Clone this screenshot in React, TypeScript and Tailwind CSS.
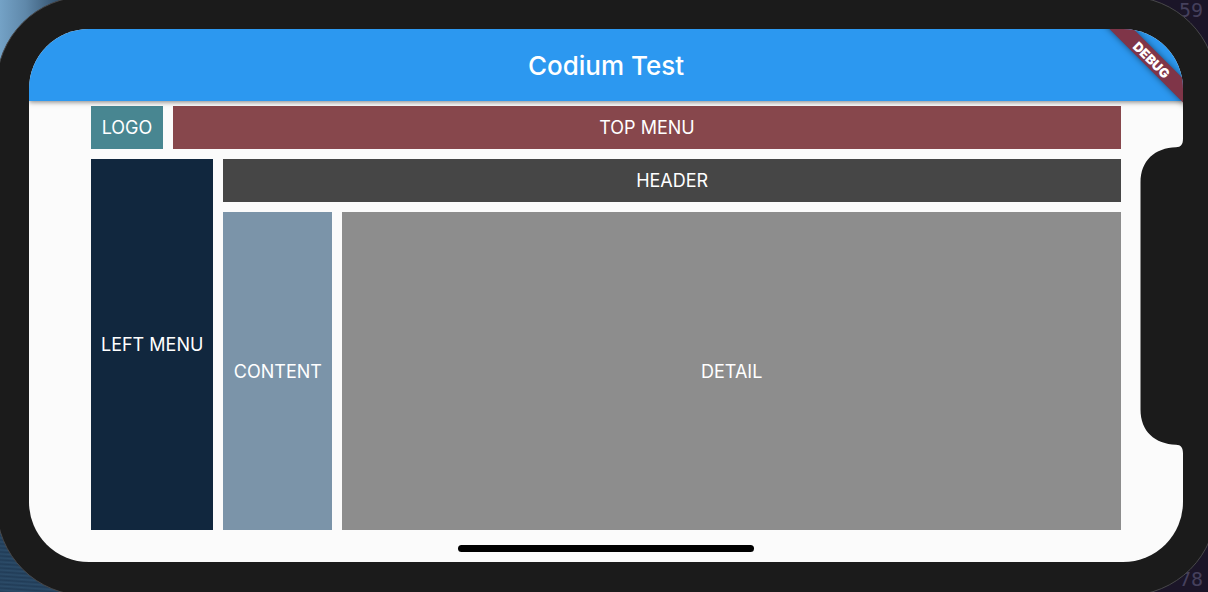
import type { ReactNode } from "react";

type PanelProps = {
  className: string;
  children: ReactNode;
};

function Panel({ className, children }: PanelProps) {
  return (
    <div className={`flex items-center justify-center px-[10px] text-lg leading-[23px] text-white ${className}`}>
      {children}
    </div>
  );
}

function Desktop() {
  return (
    <div aria-hidden="true" className="absolute inset-0 bg-[#1b1528]">
      <div className="absolute top-0 left-0 h-16 w-16 bg-linear-to-r from-[#74a2c6] from-0% via-[#5f88aa] via-40% to-[#35536f] to-90%" />
      <div className="absolute bottom-0 left-0 h-16 w-16 bg-[repeating-linear-gradient(4deg,#213c57_0px,#2c4c69_2px,#213c57_4px)]" />
      <div className="absolute top-0 right-0 bottom-0 flex flex-col justify-between pr-[5px] font-['DejaVu_Sans_Mono',monospace] text-xl leading-5 text-[#45405c]">
        <span>59</span>
        <span className="pb-[3px]">78</span>
      </div>
    </div>
  );
}

function Notch() {
  return (
    <svg
      aria-hidden="true"
      className="absolute top-1/2 right-0 -translate-y-1/2"
      width="43"
      height="319"
      viewBox="0 0 43 319"
      fill="#1b1b1b"
    >
      <path d="M43 0V2C43 8 41 10.6 36 10.8C15 11.4 0.5 24 0.5 46V273C0.5 295 15 307.6 36 308.2C41 308.4 43 311 43 317V319Z" />
    </svg>
  );
}

function DebugBanner() {
  return (
    <div className="absolute top-[22px] right-[-33px] flex h-[17px] w-32 rotate-45 items-center justify-center bg-[#7f3548] text-[13px] leading-4 font-black text-white shadow-[0_0_6px_rgba(0,0,0,0.5)]">
      DEBUG
    </div>
  );
}

export default function App() {
  return (
    <div className="relative flex min-h-screen overflow-hidden font-[Inter,sans-serif]">
      <Desktop />
      <div className="relative -mt-1 -mr-[9px] -mb-1 -ml-1 flex flex-1 rounded-[90px] border border-[#48484a] bg-[#1b1b1b] pt-8 pr-[33px] pb-[33px] pl-8">
        <div className="relative flex flex-1 flex-col overflow-hidden rounded-[60px] bg-[#fbfbfb]">
          <header className="relative flex h-[72px] items-center justify-center bg-[#2c98f0] pt-0.5 shadow-[0_1px_5px_rgba(0,0,0,0.5)]">
            <h1 className="text-[26px] leading-8 font-medium text-white">Codium Test</h1>
          </header>
          <main className="flex flex-1 flex-col gap-[10px] pt-[5px] pr-[62px] pb-8 pl-[62px]">
            <div className="flex gap-[10px]">
              <Panel className="min-w-[72px] bg-[#488691] py-[10px]">LOGO</Panel>
              <Panel className="flex-1 bg-[#87474c] py-[10px]">TOP MENU</Panel>
            </div>
            <div className="flex flex-1 gap-[10px]">
              <Panel className="bg-[#11273e]">LEFT MENU</Panel>
              <div className="flex flex-1 flex-col gap-[10px]">
                <Panel className="bg-[#464646] py-[10px]">HEADER</Panel>
                <div className="flex flex-1 gap-[10px]">
                  <Panel className="min-w-[109px] bg-[#7b94a9]">CONTENT</Panel>
                  <Panel className="flex-1 bg-[#8d8d8d]">DETAIL</Panel>
                </div>
              </div>
            </div>
          </main>
          <div className="absolute bottom-[10px] left-1/2 h-[7px] w-[296px] -translate-x-1/2 rounded-full bg-black" />
          <Notch />
          <DebugBanner />
        </div>
      </div>
    </div>
  );
}
